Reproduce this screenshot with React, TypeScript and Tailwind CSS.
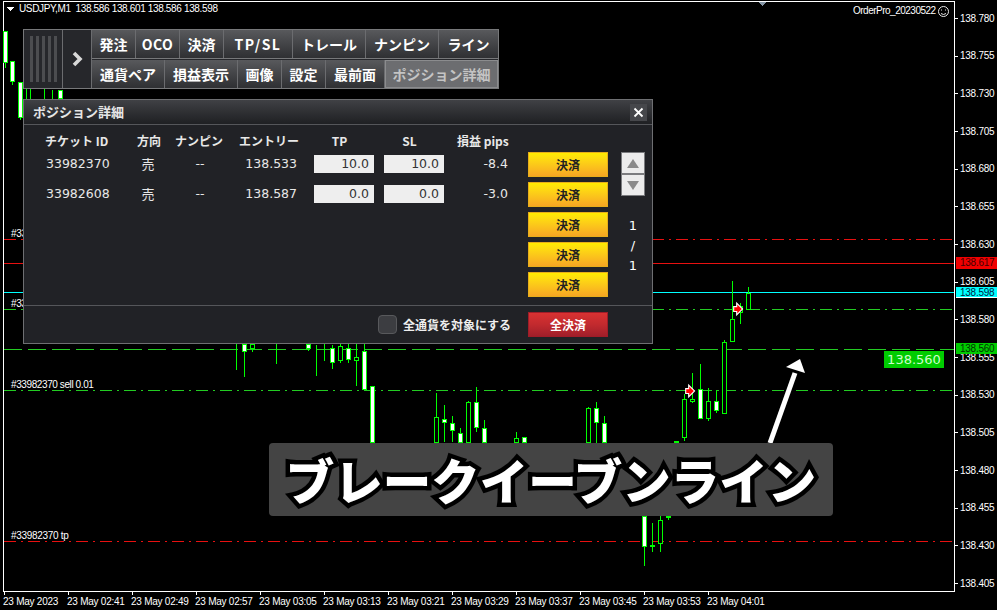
import React from 'react';

const SANS = "font-['Liberation_Sans',sans-serif]";
const green = '#00ff00';

// [x, wickTop, wickBottom, bodyTop, bodyBottom, filled]
const candles: [number, number, number, number, number, boolean][] = [
    [5, 31, 68, 31, 63, true],
    [12, 61, 85, 61, 82, true],
    [20, 82, 120, 82, 118, true],
    [26, 88, 99, 88, 88, false],
    [30, 88, 99, 88, 88, false],
    [44, 89, 99, 89, 90, false],
    [52, 90, 99, 90, 91, false],
    [60, 90, 99, 90, 99, true],
    [236, 344, 370, 344, 344, false],
    [244, 344, 377, 344, 352, true],
    [252, 344, 352, 344, 349, false],
    [276, 344, 364, 344, 344, false],
    [308, 344, 351, 344, 349, true],
    [316, 345, 376, 345, 345, false],
    [324, 344, 361, 344, 344, false],
    [332, 345, 369, 348, 363, true],
    [340, 344, 363, 346, 361, false],
    [348, 344, 363, 348, 360, true],
    [356, 344, 386, 357, 361, false],
    [364, 344, 390, 351, 390, true],
    [372, 386, 443, 386, 443, true],
    [436, 393, 443, 417, 443, false],
    [444, 405, 442, 419, 423, true],
    [452, 416, 442, 423, 431, true],
    [460, 428, 443, 433, 443, true],
    [468, 401, 443, 402, 443, false],
    [476, 387, 432, 402, 428, true],
    [484, 420, 443, 428, 443, true],
    [516, 432, 443, 438, 443, false],
    [524, 437, 443, 437, 443, true],
    [588, 407, 443, 408, 443, false],
    [596, 402, 443, 408, 423, true],
    [604, 416, 443, 423, 443, true],
    [644, 516, 566, 516, 547, true],
    [652, 523, 552, 545, 547, false],
    [660, 516, 552, 520, 544, false],
    [668, 516, 520, 516, 518, false],
    [676, 441, 443, 441, 443, false],
    [684, 394, 441, 399, 438, false],
    [692, 373, 403, 399, 402, false],
    [700, 364, 419, 389, 419, true],
    [708, 388, 421, 401, 419, false],
    [716, 390, 413, 401, 411, true],
    [724, 340, 414, 342, 414, false],
    [732, 281, 342, 319, 342, false],
    [740, 303, 324, 306, 313, false],
    [748, 287, 310, 293, 310, false],
];

const prices = ['138.780', '138.755', '138.730', '138.705', '138.680', '138.655', '138.630', '138.605', '138.580', '138.555', '138.530', '138.505', '138.480', '138.455', '138.430', '138.405'];
const times = ['23 May 2023', '23 May 02:41', '23 May 02:49', '23 May 02:57', '23 May 03:05', '23 May 03:13', '23 May 03:21', '23 May 03:29', '23 May 03:37', '23 May 03:45', '23 May 03:53', '23 May 04:01'];

const DASH_DOT = '12 5 2 5';
const LONG_DASH = '18 6';

const ChartDrawing: React.FC = () => (
    <svg className="absolute inset-0" width={997} height={610} shapeRendering="crispEdges">
        <rect x={3} y={1} width={952} height={1} fill="#fff" />
        <rect x={3} y={1} width={1} height={591} fill="#fff" />
        <rect x={954} y={1} width={1} height={591} fill="#fff" />
        <rect x={3} y={591} width={952} height={1} fill="#fff" />
        {prices.map((_, i) => <rect key={i} x={955} y={Math.round(18 + i * 37.67)} width={3} height={1} fill="#fff" />)}
        {times.map((_, i) => <rect key={i} x={4 + i * 64} y={592} width={1} height={3} fill="#fff" />)}

        <line x1={4} x2={954} y1={239.5} y2={239.5} stroke="#e81010" strokeDasharray={DASH_DOT} />
        <line x1={4} x2={954} y1={263.5} y2={263.5} stroke="#e81010" />
        <line x1={4} x2={954} y1={292.5} y2={292.5} stroke="#00ffff" />
        <line x1={4} x2={954} y1={309.5} y2={309.5} stroke="#22cc22" strokeDasharray={DASH_DOT} />
        <line x1={4} x2={954} y1={349.5} y2={349.5} stroke="#22cc22" strokeDasharray={LONG_DASH} />
        <line x1={4} x2={954} y1={390.5} y2={390.5} stroke="#22cc22" strokeDasharray={DASH_DOT} />
        <line x1={4} x2={954} y1={541.5} y2={541.5} stroke="#e81010" strokeDasharray={DASH_DOT} />

        {candles.map(([x, wt, wb, bt, bb, filled]) => (
            <g key={x}>
                <rect x={x} y={wt} width={1} height={wb - wt} fill={green} />
                {bb > bt && <rect x={x - 1.5} y={bt + 0.5} width={4} height={bb - bt - 1} fill={filled ? '#fff' : '#000'} stroke={green} />}
            </g>
        ))}

        {[[690, 391], [738, 309]].map(([x, y]) => (
            <g key={x} transform={`translate(${x} ${y}) scale(0.75)`} shapeRendering="auto">
                <path d="M-5 -2.5h4v-3.5l6 6-6 6v-3.5h-4z" fill="#f00" stroke="#fff" strokeWidth={3} paintOrder="stroke" />
            </g>
        ))}

        <path d="M6 7h8l-4 4z" fill="#fff" />
        <path d="M758 2h8l-4 4z" fill="#8595a5" />

        <g shapeRendering="auto" fill="none" stroke="#e8e8e8">
            <circle cx={943.5} cy={11.5} r={5} />
            <path d="M941 13.5q2.5 2 5 0" />
            <path d="M941.5 9.5v1M945.5 9.5v1" />
        </g>

        <g shapeRendering="auto">
            <line x1={770} y1={443} x2={795} y2={373} stroke="#fff" strokeWidth={5} />
            <path d="M800 359L786 367L805 373Z" fill="#fff" />
        </g>
    </svg>
);

const ChartLabel: React.FC<{ className: string; children: React.ReactNode }> = ({ className, children }) => (
    <span className={`absolute text-[10px] leading-[12px] text-white whitespace-pre ${SANS} ${className}`}>{children}</span>
);

const Tab: React.FC<{ label: string; width: string; active?: boolean }> = ({ label, width, active }) => (
    <div className={`${width} flex items-center justify-center border-r border-[#6b6c6f] last:border-r-0 font-bold text-[14px] font-['Noto_Sans_CJK_JP',sans-serif] ${active ? 'bg-[#6c6d70] text-[#c4c4c4] outline outline-[#8b8c8e] -outline-offset-1' : 'bg-gradient-to-b from-[#58595c] to-[#2f3033] text-white'}`}>
        {label}
    </div>
);

const Toolbar: React.FC = () => (
    <div className="absolute left-[23px] top-[29px] w-[476px] h-[60px] flex border border-[#77787a] bg-[#26272b]">
        <div className="w-[39px] border-r border-[#6b6c6f] flex items-center justify-center gap-[3px]">
            {[0, 1, 2, 3, 4].map(i => <div key={i} className="w-[3px] h-[46px] bg-[#4c4d50]" />)}
        </div>
        <div className="w-[29px] border-r border-[#6b6c6f] flex items-center justify-center">
            <svg width="11" height="16" viewBox="0 0 11 16"><path d="M2 2l6 6-6 6" fill="none" stroke="#d8d8d8" strokeWidth="3.6" /></svg>
        </div>
        <div className="flex-1 flex flex-col">
            <div className="h-[29px] flex border-b border-[#77787a]">
                <Tab label="発注" width="w-[44px]" />
                <Tab label="OCO" width="w-[44px] tracking-[0.5px]" />
                <Tab label="決済" width="w-[44px]" />
                <Tab label="TP/SL" width="w-[69px] tracking-[1.5px]" />
                <Tab label="トレール" width="w-[73px]" />
                <Tab label="ナンピン" width="w-[73px]" />
                <Tab label="ライン" width="flex-1" />
            </div>
            <div className="flex-1 flex pt-[1px]">
                <Tab label="通貨ペア" width="w-[73px]" />
                <Tab label="損益表示" width="w-[73px]" />
                <Tab label="画像" width="w-[44px]" />
                <Tab label="設定" width="w-[44px]" />
                <Tab label="最前面" width="w-[59px]" />
                <Tab label="ポジション詳細" width="flex-1" active />
            </div>
        </div>
    </div>
);

const HEAD = "text-[12px] font-bold text-[#e8e8e8] font-['Noto_Sans_CJK_JP',sans-serif] whitespace-nowrap";
const VALUE = "text-[12.5px] text-[#e8e8e8] font-['DejaVu_Sans',sans-serif]";
const INPUT = "w-[60px] h-[18px] bg-[#eeeeee] text-[#333] text-[12.5px] pr-[5px] flex items-center justify-end font-['DejaVu_Sans',sans-serif]";

const rows = [
    { id: '33982370', entry: '138.533', tp: '10.0', sl: '10.0', pips: '-8.4' },
    { id: '33982608', entry: '138.587', tp: '0.0', sl: '0.0', pips: '-3.0' },
];

const PositionDialog: React.FC = () => (
    <div className="absolute left-[23px] top-[99px] w-[630px] h-[245px] flex flex-col border border-[#6e6f72] bg-[#212226]">
        <div className="h-[25px] shrink-0 flex items-center justify-between pl-[9px] pr-[5px] border-b border-[#55565a] bg-gradient-to-b from-[#404145] to-[#1f2023]">
            <span className="text-[13px] font-bold text-[#e6e6e6] font-['Noto_Sans_CJK_JP',sans-serif]">ポジション詳細</span>
            <div className="w-[17px] h-[17px] bg-[#46474b] flex items-center justify-center">
                <svg width="11" height="11" viewBox="0 0 11 11"><path d="M1.5 1.5l8 8M9.5 1.5l-8 8" stroke="#fff" strokeWidth="1.8" /></svg>
            </div>
        </div>
        <div className="flex-1 flex">
            <div className="w-[504px] pl-[21px] pt-[8px]">
                <div className="h-[16px] flex items-center">
                    <span className={`${HEAD} w-[92px]`}>チケット ID</span>
                    <span className={`${HEAD} w-[38px]`}>方向</span>
                    <span className={`${HEAD} w-[64px]`}>ナンピン</span>
                    <span className={`${HEAD} w-[60px]`}>エントリー</span>
                    <span className={`${HEAD} w-[70px] text-center pl-[18px] pr-[7px]`}>TP</span>
                    <span className={`${HEAD} w-[70px] text-center pl-[18px] pr-[7px]`}>SL</span>
                    <span className={`${HEAD} pl-[18px]`}>損益 pips</span>
                </div>
                <div className="mt-[6px] flex flex-col gap-[12px]">
                    {rows.map(r => (
                        <div key={r.id} className="h-[18px] flex items-center">
                            <span className={`${VALUE} w-[83px] pl-[1px]`}>{r.id}</span>
                            <span className="w-[40px] text-center text-[13px] text-[#e8e8e8] font-['Noto_Sans_CJK_JP',sans-serif]">売</span>
                            <span className={`${VALUE} w-[64px] text-center`}>--</span>
                            <span className={`${VALUE} w-[65px] text-right`}>{r.entry}</span>
                            <div className={`${INPUT} ml-[17px]`}>{r.tp}</div>
                            <div className={`${INPUT} ml-[10px]`}>{r.sl}</div>
                            <span className={`${VALUE} w-[64px] text-right`}>{r.pips}</span>
                        </div>
                    ))}
                </div>
            </div>
            <div className="w-[80px] pt-[27px] flex flex-col gap-[5px]">
                {[0, 1, 2, 3, 4].map(i => (
                    <div key={i} className="h-[25px] flex items-center justify-center border border-[#e8ae1a] bg-gradient-to-b from-[#ffec00] to-[#f6a623] text-[12px] font-bold text-[#222] font-['Noto_Sans_CJK_JP',sans-serif]">決済</div>
                ))}
            </div>
            <div className="ml-[13px] w-[24px] pt-[27px] flex flex-col items-center">
                <div className="w-[24px] h-[44px] flex flex-col border border-[#7b7c7f] bg-[#ececec]">
                    <div className="flex-1 flex items-center justify-center border-b-2 border-[#7b7c7f]">
                        <svg width="12" height="9"><path d="M6 0l6 9H0z" fill="#8a8a8a" /></svg>
                    </div>
                    <div className="flex-1 flex items-center justify-center">
                        <svg width="12" height="9"><path d="M0 0h12L6 9z" fill="#8a8a8a" /></svg>
                    </div>
                </div>
                <div className="mt-[20px] flex flex-col items-center gap-[1px] text-[13px] leading-[19px] text-white font-['DejaVu_Sans',sans-serif]">
                    <span>1</span>
                    <span>/</span>
                    <span>1</span>
                </div>
            </div>
        </div>
        <div className="h-[38px] shrink-0 border-t border-[#55565a] flex items-center pl-[354px]">
            <div className="w-[19px] h-[19px] rounded-[4px] bg-[#3c3d41] border border-[#58595c]" />
            <span className="ml-[6px] w-[125px] text-[12px] font-bold text-[#eeeeee] font-['Noto_Sans_CJK_JP',sans-serif]">全通貨を対象にする</span>
            <div className="w-[80px] h-[25px] flex items-center justify-center border border-[#a01c28] bg-gradient-to-b from-[#d93232] via-[#c22a2e] to-[#a11f2a] text-[12px] font-bold text-white font-['Noto_Sans_CJK_JP',sans-serif]">全決済</div>
        </div>
    </div>
);

const App: React.FC = () => (
    <div className="relative w-[997px] h-[610px] overflow-hidden bg-black">
        <ChartDrawing />

        <ChartLabel className="left-[19px] top-[3px] tracking-[-0.35px]">USDJPY,M1  138.586 138.601 138.586 138.598</ChartLabel>
        <ChartLabel className="left-[853px] top-[5px] tracking-[-0.5px]">OrderPro_20230522</ChartLabel>
        <ChartLabel className="left-[11px] top-[228px] tracking-[-0.3px]">#33982370 tp</ChartLabel>
        <ChartLabel className="left-[11px] top-[298px] tracking-[-0.4px]">#33982608 sell 0.01</ChartLabel>
        <ChartLabel className="left-[11px] top-[379px] tracking-[-0.4px]">#33982370 sell 0.01</ChartLabel>
        <ChartLabel className="left-[11px] top-[530px] tracking-[-0.3px]">#33982370 tp</ChartLabel>

        {/* price axis */}
        <div className={`absolute left-[960px] top-0 flex flex-col text-[10px] leading-[6px] tracking-[-0.25px] text-white ${SANS}`}>
            {prices.map(p => <span key={p} className="h-[37.67px] flex items-center">{p}</span>)}
        </div>

        {/* time axis */}
        <div className={`absolute left-[3px] top-[596px] flex text-[10px] leading-[12px] tracking-[-0.25px] text-white ${SANS}`}>
            {times.map(t => <span key={t} className="w-[64px] whitespace-nowrap">{t}</span>)}
        </div>

        <span className={`absolute left-[956px] top-[257px] w-[41px] h-[12px] pl-[4px] bg-[#f00000] text-[10px] leading-[12px] tracking-[-0.25px] text-[#400] ${SANS}`}>138.617</span>
        <span className={`absolute left-[956px] top-[287px] w-[41px] h-[11px] pl-[4px] bg-[#00ffff] border-b border-white text-[10px] leading-[11px] tracking-[-0.25px] text-[#024] ${SANS}`}>138.598</span>
        <span className={`absolute left-[956px] top-[343px] w-[41px] h-[11px] pl-[4px] bg-[#00cc00] text-[10px] leading-[11px] tracking-[-0.25px] text-[#030] ${SANS}`}>138.560</span>
        <span className="absolute left-[884px] top-[351px] w-[60px] h-[17px] bg-[#00cc00] flex items-center justify-center text-[13px] text-[#ccffcc] font-['DejaVu_Sans',sans-serif]">138.560</span>

        <Toolbar />
        <PositionDialog />

        <div className="absolute left-[269px] top-[443px] w-[564px] h-[73px] rounded-[4px] bg-[#444444] flex items-center justify-center">
            <span className="text-[48.5px] leading-none font-black text-white whitespace-nowrap font-['Noto_Sans_CJK_JP',sans-serif] [-webkit-text-stroke:9px_#000] [paint-order:stroke_fill] [stroke-linejoin:round]">ブレークイーブンライン</span>
        </div>
    </div>
);

export default App;
